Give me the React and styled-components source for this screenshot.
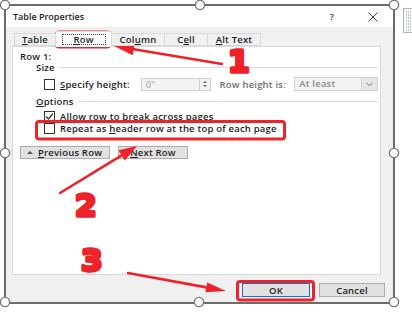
import React from "react";
import styled, { createGlobalStyle } from "styled-components";

const GlobalStyle = createGlobalStyle`
  html, body { margin: 0; padding: 0; background: #fff; }
  body { font-family: "Open Sans", "DejaVu Sans", sans-serif; }
`;

const Stage = styled.div`
  position: relative;
  width: 412px;
  height: 312px;
  box-sizing: border-box;
  padding: 4px 0 0 4px;
  background: #fff;
  overflow: hidden;
`;

const Frame = styled.div`
  width: 391px;
  height: 300px;
  box-sizing: border-box;
  border: 2px solid #6c6c6c;
  display: flex;
  flex-direction: column;
  background: #f0f0f0;
  font-size: 9.5px;
  letter-spacing: 0.2px;
  font-weight: 600;
  color: #1e1e1e;
  white-space: nowrap;
`;

const TitleBar = styled.div`
  flex: none;
  height: 21px;
  display: flex;
  align-items: center;
  background: #fff;
  padding-left: 7px;
`;

const Title = styled.span`
  font-size: 9px;
  letter-spacing: 0;
`;

const TitleButtons = styled.div`
  margin-left: auto;
  display: flex;
  height: 100%;
`;

const TitleButton = styled.span`
  width: ${(p) => p.$w}px;
  display: flex;
  align-items: center;
  justify-content: center;
  color: #333;
  font-size: 9px;
`;

const Body = styled.div`
  flex: 1;
  min-height: 0;
  display: flex;
  flex-direction: column;
  padding: 6px 12px 0 6px;
`;

const TabStrip = styled.div`
  flex: none;
  display: flex;
  height: 13px;
  padding-left: 2px;
  position: relative;
  z-index: 1;
`;

const Tab = styled.div`
  width: ${(p) => p.$w}px;
  height: ${(p) => (p.$active ? 16 : 13)}px;
  margin-top: ${(p) => (p.$active ? -2 : 0)}px;
  box-sizing: border-box;
  border-top: 1px solid #d9d9d9;
  border-right: 1px solid #d9d9d9;
  border-left: ${(p) => (p.$first ? "1px solid #d9d9d9" : "none")};
  border-bottom: ${(p) => (p.$active ? "none" : "1px solid #d9d9d9")};
  background: ${(p) => (p.$active ? "#fff" : "#f0f0f0")};
  display: flex;
  align-items: center;
  justify-content: center;
`;

const FocusLabel = styled.span`
  width: 44px;
  height: 11px;
  box-sizing: border-box;
  border: 1px dotted #444;
  display: flex;
  align-items: center;
  justify-content: center;
`;

const U = styled.span`
  text-decoration: underline;
  text-underline-offset: 1px;
`;

const Panel = styled.div`
  flex: 1;
  background: #fff;
  border: 1px solid #d9d9d9;
  padding: 4px 2px 0 7px;
  display: flex;
  flex-direction: column;
`;

const Line = styled.div`
  height: 11px;
  line-height: 11px;
`;

const SectionHead = styled.div`
  height: 11px;
  display: flex;
  align-items: center;
  margin: ${(p) => p.$mt}px 0 0 16px;
  &::after {
    content: "";
    flex: 1;
    height: 1px;
    background: #dcdcdc;
    margin-left: 5px;
  }
`;

const FieldRow = styled.div`
  height: 14px;
  margin: 4px 0 0 24px;
  display: flex;
  align-items: center;
`;

const CheckRow = styled.div`
  height: 12px;
  margin: ${(p) => p.$mt || 0}px 0 0 24px;
  display: flex;
  align-items: center;
`;

const Box = styled.span`
  flex: none;
  width: 11px;
  height: 11px;
  box-sizing: border-box;
  border: 1px solid #333;
  background: #fff;
  display: flex;
  align-items: center;
  justify-content: center;
`;

const FieldLabel = styled.span`
  width: ${(p) => p.$w}px;
  margin-left: ${(p) => p.$ml}px;
  color: ${(p) => (p.$disabled ? "#6e6e6e" : "inherit")};
`;

const CheckLabel = styled.span`
  margin-left: 5px;
`;

const SpinInput = styled.div`
  width: 70px;
  height: 13px;
  box-sizing: border-box;
  border: 1px solid #cfcfcf;
  background: #f3f3f3;
  display: flex;
`;

const InputText = styled.span`
  flex: 1;
  padding-left: 4px;
  color: #a5a5a5;
  font-weight: 400;
  line-height: 11px;
`;

const Spin = styled.div`
  width: 10px;
  border-left: 1px solid #cfcfcf;
  display: flex;
  flex-direction: column;
  align-items: center;
  justify-content: center;
  gap: 2px;
`;

const Tri = styled.span`
  width: 0;
  height: 0;
  border-left: ${(p) => p.$s}px solid transparent;
  border-right: ${(p) => p.$s}px solid transparent;
  border-${(p) => (p.$down ? "top" : "bottom")}: ${(p) => p.$s}px solid ${(p) => p.$c};
`;

const Select = styled.div`
  width: 84px;
  height: 14px;
  box-sizing: border-box;
  border: 1px solid #cfcfcf;
  background: #f3f3f3;
  display: flex;
`;

const SelectText = styled.span`
  flex: 1;
  padding-left: 4px;
  color: #8c8c8c;
  line-height: 12px;
`;

const SelectButton = styled.span`
  width: 15px;
  border-left: 1px solid #cfcfcf;
  background: #e6e6e6;
  display: flex;
  align-items: center;
  justify-content: center;
`;

const NavRow = styled.div`
  margin-top: 12px;
  display: flex;
  gap: 8px;
`;

const NavButton = styled.div`
  width: ${(p) => p.$w}px;
  height: 13px;
  box-sizing: border-box;
  background: #e1e1e1;
  border: 1px solid #adadad;
  display: flex;
  align-items: center;
  justify-content: ${(p) => (p.$center ? "center" : "flex-start")};
  padding-left: ${(p) => (p.$center ? 0 : 6)}px;
  gap: 5px;
`;

const Footer = styled.div`
  flex: none;
  height: 27px;
  box-sizing: border-box;
  display: flex;
  justify-content: flex-end;
  align-items: flex-start;
  gap: 9px;
  padding: 8px 8px 0 0;
`;

const DialogButton = styled.div`
  width: ${(p) => p.$w}px;
  height: 14px;
  box-sizing: border-box;
  background: #e1e1e1;
  border: 1px solid ${(p) => (p.$default ? "#0a74d4" : "#adadad")};
  display: flex;
  align-items: center;
  justify-content: center;
`;

const Overlay = styled.svg`
  position: absolute;
  left: 0;
  top: 0;
  pointer-events: none;
`;

const Digit = styled.text`
  font-family: "DejaVu Sans", "Liberation Sans", sans-serif;
  font-weight: 700;
  font-size: 31px;
  fill: #ee2229;
  stroke: #ee2229;
  stroke-width: 3.5px;
  stroke-linejoin: round;
`;

const RED = "#ee2229";

function Handle({ x, y }) {
  return <circle cx={x} cy={y} r="4.6" fill="#fff" stroke="#777" strokeWidth="1.4" />;
}

function Arrow({ from, tip, len = 20, half = 6 }) {
  const dx = tip[0] - from[0];
  const dy = tip[1] - from[1];
  const d = Math.hypot(dx, dy);
  const ux = dx / d;
  const uy = dy / d;
  const bx = tip[0] - ux * len;
  const by = tip[1] - uy * len;
  const px = -uy * half;
  const py = ux * half;
  return (
    <g>
      <line x1={from[0]} y1={from[1]} x2={bx} y2={by} stroke={RED} strokeWidth="2.6" strokeLinecap="round" />
      <polygon points={`${tip[0]},${tip[1]} ${bx + px},${by + py} ${bx - px},${by - py}`} fill={RED} />
    </g>
  );
}

function Check({ checked }) {
  return (
    <Box>
      {checked && (
        <svg width="9" height="9" viewBox="0 0 9 9">
          <path d="M1 4.5 L3.5 7 L8 1.5" fill="none" stroke="#333" strokeWidth="1.2" />
        </svg>
      )}
    </Box>
  );
}

export default function App() {
  return (
    <>
      <GlobalStyle />
      <Stage>
        <Frame>
          <TitleBar>
            <Title>Table Properties</Title>
            <TitleButtons>
              <TitleButton $w={42}>?</TitleButton>
              <TitleButton $w={40}>
                <svg width="10" height="10" viewBox="0 0 10 10">
                  <path d="M0.5 0.5 L9.5 9.5 M9.5 0.5 L0.5 9.5" stroke="#444" strokeWidth="1" />
                </svg>
              </TitleButton>
            </TitleButtons>
          </TitleBar>
          <Body>
            <TabStrip>
              <Tab $w={42} $first>
                <span><U>T</U>able</span>
              </Tab>
              <Tab $w={56} $active>
                <FocusLabel><U>R</U>ow</FocusLabel>
              </Tab>
              <Tab $w={53}>
                <span>Col<U>u</U>mn</span>
              </Tab>
              <Tab $w={43}>
                <span>C<U>e</U>ll</span>
              </Tab>
              <Tab $w={53}>
                <span><U>A</U>lt Text</span>
              </Tab>
            </TabStrip>
            <Panel>
              <Line>Row 1:</Line>
              <SectionHead $mt={0}>Size</SectionHead>
              <FieldRow>
                <Check />
                <FieldLabel $w={81} $ml={5}><U>S</U>pecify height:</FieldLabel>
                <SpinInput>
                  <InputText>0"</InputText>
                  <Spin>
                    <Tri $s={2} $c="#666" />
                    <Tri $s={2} $c="#666" $down />
                  </Spin>
                </SpinInput>
                <FieldLabel $w={75} $ml={9} $disabled>Row height is:</FieldLabel>
                <Select>
                  <SelectText>At least</SelectText>
                  <SelectButton>
                    <svg width="7" height="5" viewBox="0 0 7 5">
                      <path d="M0.5 0.8 L3.5 3.8 L6.5 0.8" fill="none" stroke="#777" strokeWidth="1" />
                    </svg>
                  </SelectButton>
                </Select>
              </FieldRow>
              <SectionHead $mt={5}><U>O</U>ptions</SectionHead>
              <CheckRow $mt={3}>
                <Check checked />
                <CheckLabel>Allow row to brea<U>k</U> across pages</CheckLabel>
              </CheckRow>
              <CheckRow>
                <Check />
                <CheckLabel>Repeat as <U>h</U>eader row at the top of each page</CheckLabel>
              </CheckRow>
              <NavRow>
                <NavButton $w={90}>
                  <Tri $s={3} $c="#555" />
                  <span><U>P</U>revious Row</span>
                </NavButton>
                <NavButton $w={70} $center>
                  <span><U>N</U>ext Row</span>
                </NavButton>
              </NavRow>
            </Panel>
          </Body>
          <Footer>
            <DialogButton $w={68} $default>OK</DialogButton>
            <DialogButton $w={66}>Cancel</DialogButton>
          </Footer>
        </Frame>

        <Overlay width="412" height="312" viewBox="0 0 412 312">
          <rect x="403.5" y="8.5" width="14" height="24" fill="#fff" stroke="#b5b5b5" />
          {[12, 15, 18, 21, 24, 27, 30].map((y) => (
            <line key={y} x1="406" y1={y} x2="412" y2={y} stroke="#7d8fb8" strokeWidth="1" strokeDasharray="1 1" />
          ))}

          <Handle x={5} y={5} />
          <Handle x={200} y={5} />
          <Handle x={394} y={5} />
          <Handle x={5} y={153} />
          <Handle x={394} y={153} />
          <Handle x={5} y={302} />
          <Handle x={199} y={302} />
          <Handle x={394} y={302} />

          <rect x="56.5" y="32" width="53" height="15" rx="2.5" fill="none" stroke={RED} strokeWidth="3" />
          <rect x="36.5" y="121.5" width="248" height="17.5" rx="2.5" fill="none" stroke={RED} strokeWidth="3" />
          <rect x="237.5" y="281.5" width="76" height="18.5" rx="2.5" fill="none" stroke={RED} strokeWidth="3" />

          <Arrow from={[222, 64]} tip={[114, 46]} len={20} half={6} />
          <Arrow from={[60, 193]} tip={[137, 146]} len={18} half={6} />
          <Arrow from={[128, 273]} tip={[226, 291]} len={20} half={5} />

          <Digit x="228" y="72">1</Digit>
          <Digit x="75" y="216">2</Digit>
          <Digit x="81" y="271">3</Digit>
        </Overlay>
      </Stage>
    </>
  );
}
